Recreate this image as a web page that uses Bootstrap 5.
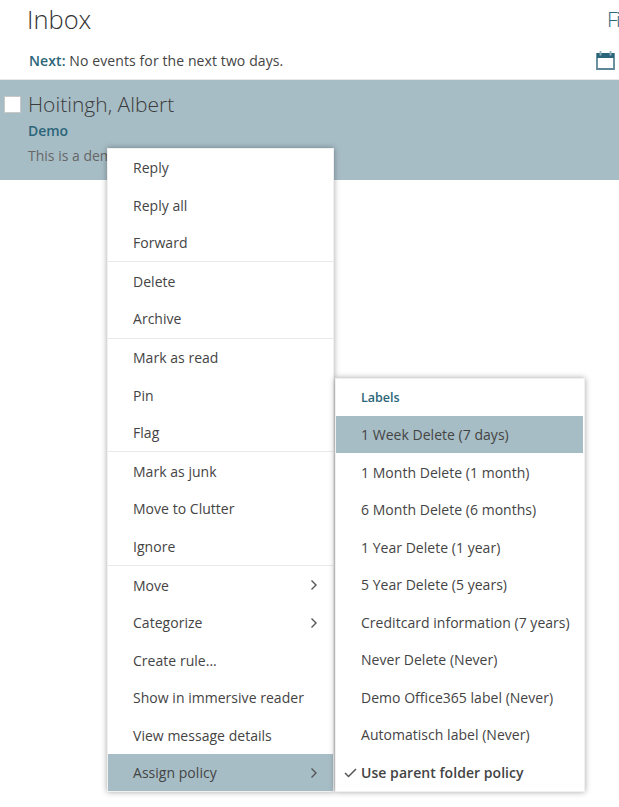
<!DOCTYPE html>
<html lang="en"><head><meta charset="utf-8"><title>Inbox</title>
<link href="https://cdn.jsdelivr.net/npm/bootstrap@5.3.0/dist/css/bootstrap.min.css" rel="stylesheet">
<style>
html,body{height:100%;overflow:hidden}
body{font-family:"Open Sans","Liberation Sans",sans-serif;font-size:14px;color:#444;background:#fff;position:relative;--teal:#2b6579;--sel:#a7bdc6}
.top-row{padding-left:27px;height:41px;overflow:hidden;white-space:nowrap}
.inbox-title{flex:0 0 580px;font-size:25.5px;font-weight:300;line-height:39px;color:#333}
.filter-link{font-size:21px;font-weight:300;line-height:39px;color:var(--teal);letter-spacing:-1.5px}
.next-row{height:38px;padding:0 4px 0 29px;letter-spacing:.1px}
.next-label{color:var(--teal);font-weight:600}
.msg-band{height:101px;background:var(--sel);border-top:1px solid #e8e8e8;padding:12px 0 0 4px}
.msg-check{width:17px;height:17px;background:#fff;border:1px solid #c8c8c8;margin-top:4px}
.msg-sender{font-size:21px;font-weight:300;line-height:24px;color:#3b3b3b;margin-left:7px}
.msg-subject{color:var(--teal);font-weight:600;font-size:14px;line-height:20px;margin:5px 0 0 24px;letter-spacing:-.1px}
.msg-preview{color:#666;font-size:14px;line-height:20px;margin:5px 0 0 24px}
.ctx-menu{display:block;position:absolute;margin:0;padding:0;min-width:0;border:1px solid #f0f0f0;border-radius:0;box-shadow:0 0 6px rgba(0,0,0,.35);font-size:14px;background:#fff}
.ctx-main{left:107px;top:147.8px;width:227px}
.ctx-sub{left:335px;top:378px;width:250px}
.ctx-menu .dropdown-item{height:37.5px;display:flex;align-items:center;padding:0 20px 0 25px;color:#444;letter-spacing:.03px;position:relative}
.ctx-menu .dropdown-divider{margin:0 0 .25px;border-color:#e9e9e9;height:1px;opacity:1}
.ctx-menu .is-sel{background:var(--sel);color:#444}
.ctx-sub .is-sel{width:calc(100% - 1px);height:37px;margin-bottom:.5px}
.ctx-head{height:37px;padding:2px 0 0 25px;display:flex;align-items:center;color:var(--teal);font-weight:600;font-size:12.5px}
.chev{position:absolute;right:15px;top:13px}
.tick{position:absolute;left:8px;top:14px}
.ctx-menu .use-parent{font-weight:600;letter-spacing:.05px}
</style></head>
<body>
<div class="d-flex top-row"><div class="inbox-title">Inbox</div><div class="filter-link">Filter</div></div>
<div class="d-flex align-items-center justify-content-between next-row">
<div><span class="next-label">Next:</span> No events for the next two days.</div>
<svg width="19" height="19" viewBox="0 0 19 19" aria-hidden="true"><path d="M1 3h17v15H1z" fill="#fff" stroke="#5d8797" stroke-width="1.8"/><path d="M1 2h17v5H1z" fill="#2b6579"/><path d="M4.5 0v4.5M14.5 0v4.5" stroke="#8fb0bc" stroke-width="1.8"/></svg>
</div>
<div class="msg-band">
<div class="d-flex align-items-start"><div class="msg-check"></div><div class="msg-sender">Hoitingh, Albert</div></div>
<div class="msg-subject">Demo</div>
<div class="msg-preview">This is a demo message</div>
</div>

<div class="dropdown-menu ctx-menu ctx-main">
<a class="dropdown-item">Reply</a><a class="dropdown-item">Reply all</a><a class="dropdown-item">Forward</a>
<hr class="dropdown-divider">
<a class="dropdown-item">Delete</a><a class="dropdown-item">Archive</a>
<hr class="dropdown-divider">
<a class="dropdown-item">Mark as read</a><a class="dropdown-item">Pin</a><a class="dropdown-item">Flag</a>
<hr class="dropdown-divider">
<a class="dropdown-item">Mark as junk</a><a class="dropdown-item">Move to Clutter</a><a class="dropdown-item">Ignore</a>
<hr class="dropdown-divider">
<a class="dropdown-item">Move<svg class="chev" width="8" height="12" viewBox="0 0 8 12"><path d="M1.5 1.5 6 6l-4.5 4.5" fill="none" stroke="#555" stroke-width="1.4"/></svg></a>
<a class="dropdown-item">Categorize<svg class="chev" width="8" height="12" viewBox="0 0 8 12"><path d="M1.5 1.5 6 6l-4.5 4.5" fill="none" stroke="#555" stroke-width="1.4"/></svg></a>
<a class="dropdown-item">Create rule...</a><a class="dropdown-item">Show in immersive reader</a><a class="dropdown-item">View message details</a>
<a class="dropdown-item is-sel">Assign policy<svg class="chev" width="8" height="12" viewBox="0 0 8 12"><path d="M1.5 1.5 6 6l-4.5 4.5" fill="none" stroke="#555" stroke-width="1.4"/></svg></a>
</div>

<div class="dropdown-menu ctx-menu ctx-sub">
<div class="ctx-head">Labels</div>
<a class="dropdown-item is-sel">1 Week Delete (7 days)</a>
<a class="dropdown-item">1 Month Delete (1 month)</a>
<a class="dropdown-item">6 Month Delete (6 months)</a>
<a class="dropdown-item">1 Year Delete (1 year)</a>
<a class="dropdown-item">5 Year Delete (5 years)</a>
<a class="dropdown-item">Creditcard information (7 years)</a>
<a class="dropdown-item">Never Delete (Never)</a>
<a class="dropdown-item">Demo Office365 label (Never)</a>
<a class="dropdown-item">Automatisch label (Never)</a>
<a class="dropdown-item use-parent"><svg class="tick" width="13" height="10" viewBox="0 0 13 10"><path d="M1 5l3.5 3.5L12 1" fill="none" stroke="#555" stroke-width="1.5"/></svg>Use parent folder policy</a>
</div>
<script src="https://cdn.jsdelivr.net/npm/bootstrap@5.3.0/dist/js/bootstrap.bundle.min.js"></script>
</body></html>
